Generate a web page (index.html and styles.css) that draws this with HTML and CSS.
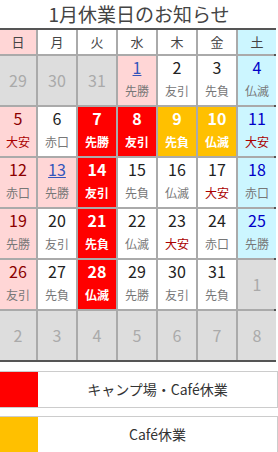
FILE: index.html
```html
<!DOCTYPE html>
<html lang="ja">
<head>
<meta charset="utf-8">
<link rel="stylesheet" href="styles.css">
</head>
<body>
<h1 class="title">1月休業日のお知らせ</h1>
<div class="cal">
  <div class="hd sun">日</div><div class="hd">月</div><div class="hd">火</div><div class="hd">水</div><div class="hd">木</div><div class="hd">金</div><div class="hd sat">土</div>

  <div class="c other"><span class="n">29</span></div>
  <div class="c other"><span class="n">30</span></div>
  <div class="c other"><span class="n">31</span></div>
  <div class="c sun"><a class="n link">1</a><span class="r">先勝</span></div>
  <div class="c"><span class="n">2</span><span class="r">友引</span></div>
  <div class="c"><span class="n">3</span><span class="r">先負</span></div>
  <div class="c sat"><span class="n">4</span><span class="r">仏滅</span></div>

  <div class="c sun"><span class="n">5</span><span class="r taian">大安</span></div>
  <div class="c"><span class="n">6</span><span class="r">赤口</span></div>
  <div class="c red"><span class="n">7</span><span class="r">先勝</span></div>
  <div class="c red"><span class="n">8</span><span class="r">友引</span></div>
  <div class="c ora"><span class="n">9</span><span class="r">先負</span></div>
  <div class="c ora"><span class="n">10</span><span class="r">仏滅</span></div>
  <div class="c sat"><span class="n">11</span><span class="r taian">大安</span></div>

  <div class="c sun"><span class="n">12</span><span class="r">赤口</span></div>
  <div class="c sun"><a class="n link">13</a><span class="r">先勝</span></div>
  <div class="c red"><span class="n">14</span><span class="r">友引</span></div>
  <div class="c"><span class="n">15</span><span class="r">先負</span></div>
  <div class="c"><span class="n">16</span><span class="r">仏滅</span></div>
  <div class="c"><span class="n">17</span><span class="r taian">大安</span></div>
  <div class="c sat"><span class="n">18</span><span class="r">赤口</span></div>

  <div class="c sun"><span class="n">19</span><span class="r">先勝</span></div>
  <div class="c"><span class="n">20</span><span class="r">友引</span></div>
  <div class="c red"><span class="n">21</span><span class="r">先負</span></div>
  <div class="c"><span class="n">22</span><span class="r">仏滅</span></div>
  <div class="c"><span class="n">23</span><span class="r taian">大安</span></div>
  <div class="c"><span class="n">24</span><span class="r">赤口</span></div>
  <div class="c sat"><span class="n">25</span><span class="r">先勝</span></div>

  <div class="c sun"><span class="n">26</span><span class="r">友引</span></div>
  <div class="c"><span class="n">27</span><span class="r">先負</span></div>
  <div class="c red"><span class="n">28</span><span class="r">仏滅</span></div>
  <div class="c"><span class="n">29</span><span class="r">先勝</span></div>
  <div class="c"><span class="n">30</span><span class="r">友引</span></div>
  <div class="c"><span class="n">31</span><span class="r">先負</span></div>
  <div class="c other"><span class="n">1</span></div>

  <div class="c other"><span class="n">2</span></div>
  <div class="c other"><span class="n">3</span></div>
  <div class="c other"><span class="n">4</span></div>
  <div class="c other"><span class="n">5</span></div>
  <div class="c other"><span class="n">6</span></div>
  <div class="c other"><span class="n">7</span></div>
  <div class="c other"><span class="n">8</span></div>
</div>

<div class="legend">
  <div class="swatch sw-red"></div>
  <div class="label">キャンプ場・Café休業</div>
</div>
<div class="legend">
  <div class="swatch sw-ora"></div>
  <div class="label">Café休業</div>
</div>
</body>
</html>
```

FILE: styles.css
```css
html, body {
  margin: 0;
  padding: 0;
  background: #fff;
}
body {
  width: 278px;
  font-family: "Noto Sans CJK JP", "Noto Sans", sans-serif;
  color: #333;
}
.title {
  margin: 0;
  height: 28px;
  font-size: 19px;
  font-weight: normal;
  line-height: 28px;
  text-align: center;
  color: #444;
}
.cal {
  display: grid;
  grid-template-columns: 36px repeat(6, 38px);
  grid-template-rows: 24px repeat(6, 49px);
  gap: 2px;
  width: 274px;
  background: #aaa;
  border-top: 2px solid #555;
  border-right: 2px solid #555;
  border-bottom: 2px solid #555;
}
.hd {
  background: #fff;
  font-size: 13px;
  line-height: 24px;
  text-align: center;
  color: #444;
}
.hd.sun { background: #ffd6d6; }
.hd.sat { background: #ccf6ff; }
.c {
  background: #fff;
  display: flex;
  flex-direction: column;
  align-items: center;
  padding-top: 1px;
  box-sizing: border-box;
}
.n {
  font-size: 16px;
  line-height: 21px;
  color: #222;
}
.r {
  margin-top: 4px;
  font-size: 12px;
  line-height: 17px;
  color: #777;
}
.r.taian { color: #a00; }
.c.sun { background: #ffd6d6; }
.c.sun .n { color: #8b0000; }
.c.sat { background: #ccf6ff; }
.c.sat .n { color: #0000c8; }
.c .n.link { color: #3355bb; text-decoration: underline; }
.c.red { background: #ff0000; }
.c.ora { background: #ffc000; }
.c.red .n, .c.red .r, .c.ora .n, .c.ora .r {
  color: #fff;
  font-weight: bold;
}
.c.other {
  background: #ddd;
  justify-content: center;
  padding-top: 0;
}
.c.other .n { color: #aaa; }
.legend {
  display: flex;
  height: 35px;
  border-top: 1px solid #ccc;
  border-bottom: 1px solid #ccc;
  border-right: 1px solid #ccc;
  margin-top: 9px;
}
.legend + .legend { margin-top: 8px; }
.swatch { width: 38px; }
.sw-red { background: #ff0000; }
.sw-ora { background: #ffc000; }
.label {
  flex: 1;
  text-align: center;
  font-size: 14px;
  line-height: 35px;
  color: #333;
}
```
